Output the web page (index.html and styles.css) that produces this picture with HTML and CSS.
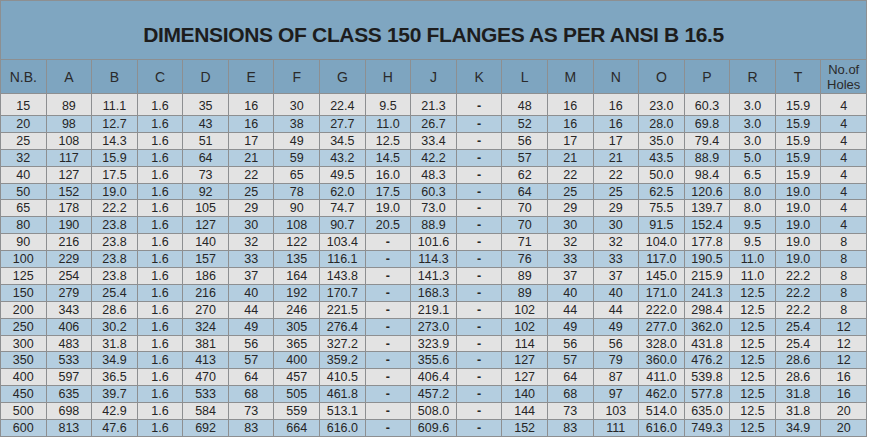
FILE: index.html
```html
<!DOCTYPE html>
<html>
<head>
<meta charset="utf-8">
<link rel="stylesheet" href="styles.css">
</head>
<body>
<table class="flange">
<colgroup>
<col><col><col><col><col><col><col><col><col><col><col><col><col><col><col><col><col><col><col>
</colgroup>
<thead>
<tr class="title-row"><th colspan="19" class="title">DIMENSIONS OF CLASS 150 FLANGES AS PER ANSI B 16.5</th></tr>
<tr class="head-row"><th>N.B.</th><th>A</th><th>B</th><th>C</th><th>D</th><th>E</th><th>F</th><th>G</th><th>H</th><th>J</th><th>K</th><th>L</th><th>M</th><th>N</th><th>O</th><th>P</th><th>R</th><th>T</th><th class="holes">No.of<br>Holes</th></tr>
</thead>
<tbody>
<tr class="first"><td>15</td><td>89</td><td>11.1</td><td>1.6</td><td>35</td><td>16</td><td>30</td><td>22.4</td><td>9.5</td><td>21.3</td><td class="dash">-</td><td>48</td><td>16</td><td>16</td><td>23.0</td><td>60.3</td><td>3.0</td><td>15.9</td><td>4</td></tr>
<tr><td>20</td><td>98</td><td>12.7</td><td>1.6</td><td>43</td><td>16</td><td>38</td><td>27.7</td><td>11.0</td><td>26.7</td><td class="dash">-</td><td>52</td><td>16</td><td>16</td><td>28.0</td><td>69.8</td><td>3.0</td><td>15.9</td><td>4</td></tr>
<tr><td>25</td><td>108</td><td>14.3</td><td>1.6</td><td>51</td><td>17</td><td>49</td><td>34.5</td><td>12.5</td><td>33.4</td><td class="dash">-</td><td>56</td><td>17</td><td>17</td><td>35.0</td><td>79.4</td><td>3.0</td><td>15.9</td><td>4</td></tr>
<tr><td>32</td><td>117</td><td>15.9</td><td>1.6</td><td>64</td><td>21</td><td>59</td><td>43.2</td><td>14.5</td><td>42.2</td><td class="dash">-</td><td>57</td><td>21</td><td>21</td><td>43.5</td><td>88.9</td><td>5.0</td><td>15.9</td><td>4</td></tr>
<tr><td>40</td><td>127</td><td>17.5</td><td>1.6</td><td>73</td><td>22</td><td>65</td><td>49.5</td><td>16.0</td><td>48.3</td><td class="dash">-</td><td>62</td><td>22</td><td>22</td><td>50.0</td><td>98.4</td><td>6.5</td><td>15.9</td><td>4</td></tr>
<tr><td>50</td><td>152</td><td>19.0</td><td>1.6</td><td>92</td><td>25</td><td>78</td><td>62.0</td><td>17.5</td><td>60.3</td><td class="dash">-</td><td>64</td><td>25</td><td>25</td><td>62.5</td><td>120.6</td><td>8.0</td><td>19.0</td><td>4</td></tr>
<tr><td>65</td><td>178</td><td>22.2</td><td>1.6</td><td>105</td><td>29</td><td>90</td><td>74.7</td><td>19.0</td><td>73.0</td><td class="dash">-</td><td>70</td><td>29</td><td>29</td><td>75.5</td><td>139.7</td><td>8.0</td><td>19.0</td><td>4</td></tr>
<tr><td>80</td><td>190</td><td>23.8</td><td>1.6</td><td>127</td><td>30</td><td>108</td><td>90.7</td><td>20.5</td><td>88.9</td><td class="dash">-</td><td>70</td><td>30</td><td>30</td><td>91.5</td><td>152.4</td><td>9.5</td><td>19.0</td><td>4</td></tr>
<tr><td>90</td><td>216</td><td>23.8</td><td>1.6</td><td>140</td><td>32</td><td>122</td><td>103.4</td><td class="dash">-</td><td>101.6</td><td class="dash">-</td><td>71</td><td>32</td><td>32</td><td>104.0</td><td>177.8</td><td>9.5</td><td>19.0</td><td>8</td></tr>
<tr><td>100</td><td>229</td><td>23.8</td><td>1.6</td><td>157</td><td>33</td><td>135</td><td>116.1</td><td class="dash">-</td><td>114.3</td><td class="dash">-</td><td>76</td><td>33</td><td>33</td><td>117.0</td><td>190.5</td><td>11.0</td><td>19.0</td><td>8</td></tr>
<tr><td>125</td><td>254</td><td>23.8</td><td>1.6</td><td>186</td><td>37</td><td>164</td><td>143.8</td><td class="dash">-</td><td>141.3</td><td class="dash">-</td><td>89</td><td>37</td><td>37</td><td>145.0</td><td>215.9</td><td>11.0</td><td>22.2</td><td>8</td></tr>
<tr><td>150</td><td>279</td><td>25.4</td><td>1.6</td><td>216</td><td>40</td><td>192</td><td>170.7</td><td class="dash">-</td><td>168.3</td><td class="dash">-</td><td>89</td><td>40</td><td>40</td><td>171.0</td><td>241.3</td><td>12.5</td><td>22.2</td><td>8</td></tr>
<tr><td>200</td><td>343</td><td>28.6</td><td>1.6</td><td>270</td><td>44</td><td>246</td><td>221.5</td><td class="dash">-</td><td>219.1</td><td class="dash">-</td><td>102</td><td>44</td><td>44</td><td>222.0</td><td>298.4</td><td>12.5</td><td>22.2</td><td>8</td></tr>
<tr><td>250</td><td>406</td><td>30.2</td><td>1.6</td><td>324</td><td>49</td><td>305</td><td>276.4</td><td class="dash">-</td><td>273.0</td><td class="dash">-</td><td>102</td><td>49</td><td>49</td><td>277.0</td><td>362.0</td><td>12.5</td><td>25.4</td><td>12</td></tr>
<tr><td>300</td><td>483</td><td>31.8</td><td>1.6</td><td>381</td><td>56</td><td>365</td><td>327.2</td><td class="dash">-</td><td>323.9</td><td class="dash">-</td><td>114</td><td>56</td><td>56</td><td>328.0</td><td>431.8</td><td>12.5</td><td>25.4</td><td>12</td></tr>
<tr><td>350</td><td>533</td><td>34.9</td><td>1.6</td><td>413</td><td>57</td><td>400</td><td>359.2</td><td class="dash">-</td><td>355.6</td><td class="dash">-</td><td>127</td><td>57</td><td>79</td><td>360.0</td><td>476.2</td><td>12.5</td><td>28.6</td><td>12</td></tr>
<tr><td>400</td><td>597</td><td>36.5</td><td>1.6</td><td>470</td><td>64</td><td>457</td><td>410.5</td><td class="dash">-</td><td>406.4</td><td class="dash">-</td><td>127</td><td>64</td><td>87</td><td>411.0</td><td>539.8</td><td>12.5</td><td>28.6</td><td>16</td></tr>
<tr><td>450</td><td>635</td><td>39.7</td><td>1.6</td><td>533</td><td>68</td><td>505</td><td>461.8</td><td class="dash">-</td><td>457.2</td><td class="dash">-</td><td>140</td><td>68</td><td>97</td><td>462.0</td><td>577.8</td><td>12.5</td><td>31.8</td><td>16</td></tr>
<tr><td>500</td><td>698</td><td>42.9</td><td>1.6</td><td>584</td><td>73</td><td>559</td><td>513.1</td><td class="dash">-</td><td>508.0</td><td class="dash">-</td><td>144</td><td>73</td><td>103</td><td>514.0</td><td>635.0</td><td>12.5</td><td>31.8</td><td>20</td></tr>
<tr><td>600</td><td>813</td><td>47.6</td><td>1.6</td><td>692</td><td>83</td><td>664</td><td>616.0</td><td class="dash">-</td><td>609.6</td><td class="dash">-</td><td>152</td><td>83</td><td>111</td><td>616.0</td><td>749.3</td><td>12.5</td><td>34.9</td><td>20</td></tr>
</tbody>
</table>
</body>
</html>
```
FILE: styles.css
```css
html, body {
  margin: 0;
  padding: 0;
  background: #ffffff;
}

.flange {
  border-collapse: collapse;
  table-layout: fixed;
  width: 867px;
  font-family: "Liberation Sans", Arial, Helvetica, sans-serif;
  color: #262626;
}

.flange th,
.flange td {
  border: 1px solid #8d8f91;
  text-align: center;
  padding: 0;
  overflow: hidden;
  white-space: nowrap;
}

.title-row .title {
  background: #7fa6c1;
  font-size: 21px;
  font-weight: bold;
  color: #1d1d1d;
  height: 59px;
  line-height: 20px;
  padding-top: 10px;
  padding-bottom: 0;
  box-sizing: border-box;
  letter-spacing: -0.35px;
}

.head-row th {
  background: #7ea5c0;
  font-weight: normal;
  font-size: 14px;
  color: #2a2a2a;
  height: 34px;
  line-height: 16px;
  box-sizing: border-box;
}

.head-row .holes {
  font-size: 13px;
  line-height: 15px;
}

.flange tbody tr {
  height: 16.9px;
}

.flange tbody tr.first {
  height: 22px;
}

.flange tbody td {
  font-size: 12.5px;
  line-height: 14px;
}

.flange tbody tr.first td {
  padding-top: 3px;
}

.flange tbody tr:nth-child(odd) td {
  background: #e3e3e3;
}

.flange tbody tr:nth-child(even) td {
  background: #b4cee0;
}

.flange td.dash {
  font-weight: bold;
}
```
